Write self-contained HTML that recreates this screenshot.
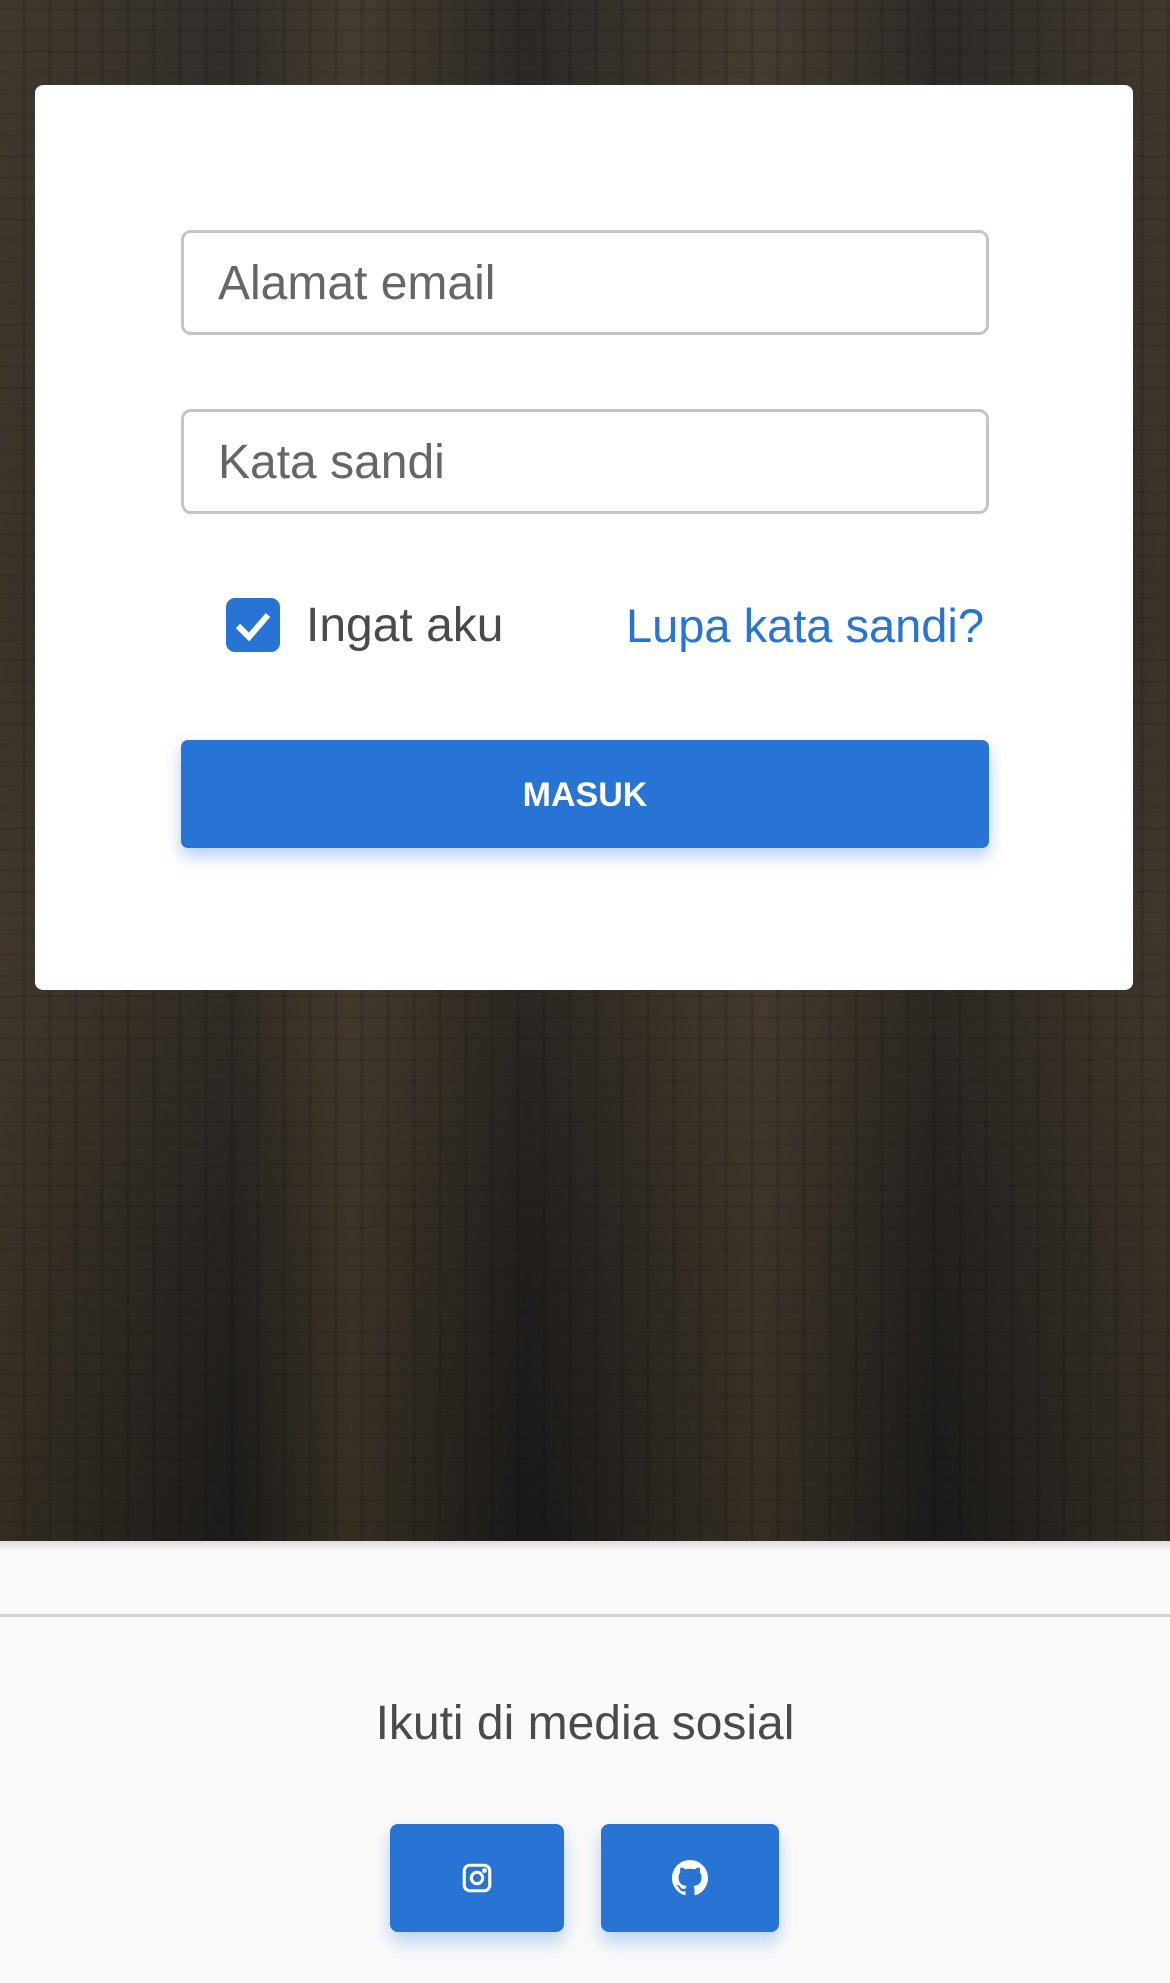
<!DOCTYPE html>
<html><head><meta charset="utf-8"><style>
*{margin:0;padding:0;box-sizing:border-box}
body{width:1170px;height:1983px;background:#fafafa;font-family:"Liberation Sans",Roboto,sans-serif;position:relative;overflow:hidden}
.bg{position:absolute;left:0;top:0;width:1170px;height:1541px;
background:
repeating-linear-gradient(90deg,rgba(0,0,0,0) 0 22px,rgba(0,0,0,.1) 22px 26px),
repeating-linear-gradient(0deg,rgba(0,0,0,0) 0 18px,rgba(0,0,0,.07) 18px 21px),
linear-gradient(90deg,rgba(70,60,42,.5) 0%,rgba(20,20,22,.2) 20%,rgba(80,68,45,.45) 30%,rgba(15,15,18,.3) 45%,rgba(85,72,50,.4) 65%,rgba(20,20,20,.3) 80%,rgba(70,60,45,.5) 100%),
linear-gradient(180deg,#3a3530 0%,#2e2a26 40%,#3b342b 60%,#2a2622 80%,#1e1c1a 100%);}
.shadowline{position:absolute;left:0;top:1541px;width:1170px;height:10px;background:linear-gradient(#ddd,#fafafa)}
.card{position:absolute;left:35px;top:85px;width:1098px;height:905px;background:#fff;border-radius:8px}
.inp{position:absolute;left:181px;width:808px;height:105px;border:3px solid #c4c4c4;border-radius:10px;background:#fff;font-size:48px;color:#666;padding-left:34px;line-height:101px}
.cb{position:absolute;left:226px;top:598px;width:54px;height:54px;background:#2874d4;border-radius:9px}
.lbl{position:absolute;top:596px;font-size:48px;line-height:60px}
.btn{position:absolute;left:181px;top:740px;width:808px;height:108px;background:#2874d4;border-radius:7px;color:#fff;font-weight:bold;font-size:34px;text-align:center;line-height:110px;box-shadow:0 8px 16px rgba(40,116,212,.35)}
.hr{position:absolute;left:0;top:1614px;width:1170px;height:3px;background:#d2d2d2}
.foot{position:absolute;left:0;top:1696px;width:1170px;text-align:center;font-size:48px;color:#4a4a4a}
.sb{position:absolute;top:1824px;height:108px;background:#2874d4;border-radius:8px;box-shadow:0 10px 18px rgba(40,116,212,.3);display:flex;align-items:center;justify-content:center}
</style></head><body>
<div class="bg"></div>
<div class="shadowline"></div>
<div class="card"></div>
<div class="inp" style="top:230px">Alamat email</div>
<div class="inp" style="top:409px">Kata sandi</div>
<div class="cb"><svg width="54" height="54" viewBox="0 0 54 54"><path d="M12 28 L23 39 L42 17" stroke="#fff" stroke-width="6" fill="none"/></svg></div>
<div class="lbl" style="left:306px;color:#4a4a4a">Ingat aku</div>
<div class="lbl" style="left:626px;color:#2874d4;font-size:47px">Lupa kata sandi?</div>
<div class="btn">MASUK</div>
<div class="hr"></div>
<div class="foot">Ikuti di media sosial</div>
<div class="sb" style="left:390px;width:174px"><svg width="34" height="34" viewBox="0 0 24 24" fill="none" stroke="#fff" stroke-width="2.2"><rect x="3" y="3" width="18" height="18" rx="4"/><circle cx="12" cy="12" r="4"/><circle cx="17.3" cy="6.7" r=".6" fill="#fff"/></svg></div>
<div class="sb" style="left:601px;width:178px"><svg width="36" height="36" viewBox="0 0 16 16" fill="#fff"><path d="M8 0C3.58 0 0 3.58 0 8c0 3.54 2.290 6.53 5.47 7.59.4.07.55-.17.55-.38v-1.33c-2.23.48-2.7-1.070-2.7-1.070-.36-.92-.89-1.170-.89-1.170-.73-.5.06-.49.06-.49.8.06 1.23.83 1.23.83.71 1.22 1.87.87 2.33.66.07-.52.28-.87.51-1.070-1.78-.2-3.64-.89-3.64-3.95 0-.87.31-1.59.82-2.15-.08-.2-.36-1.02.08-2.12 0 0 .67-.21 2.2.82a7.5 7.5 0 0 1 4 0c1.53-1.04 2.2-.82 2.2-.82.44 1.1.16 1.92.08 2.12.51.56.82 1.27.82 2.15 0 3.07-1.87 3.75-3.65 3.95.29.25.54.73.54 1.48v2.2c0 .21.15.46.55.38A8.01 8.01 0 0 0 16 8c0-4.42-3.58-8-8-8z"/></svg></div>
</body></html>
